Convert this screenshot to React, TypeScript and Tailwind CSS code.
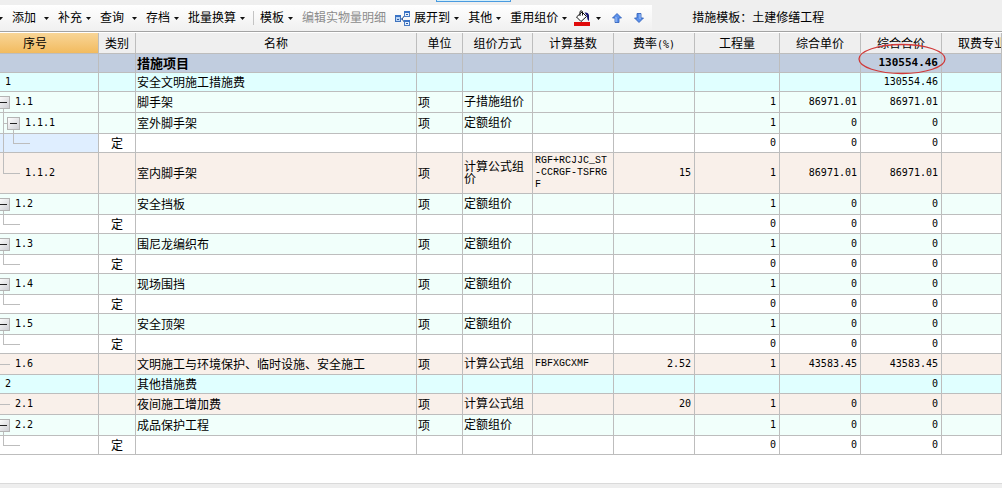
import { useState } from "react";
import clsx from "clsx";

type Tone = "title" | "section" | "group" | "formula" | "plain";

type Row = {
  no?: string;
  level: number;
  toggle?: boolean;
  guide?: "end" | "end-deep" | "mid" | "dash";
  selected?: boolean;
  tone: Tone;
  kind?: string;
  name?: string;
  unit?: string;
  method?: string;
  base?: string;
  rate?: string;
  qty?: string;
  price?: string;
  total?: string;
};

const rows: Row[] = [
  { level: 0, tone: "title", name: "措施项目", total: "130554.46" },
  { no: "1", level: 0, tone: "section", name: "安全文明施工措施费", total: "130554.46" },
  { no: "1.1", level: 1, toggle: true, tone: "group", name: "脚手架", unit: "项", method: "子措施组价", qty: "1", price: "86971.01", total: "86971.01" },
  { no: "1.1.1", level: 2, toggle: true, guide: "mid", tone: "group", name: "室外脚手架", unit: "项", method: "定额组价", qty: "1", price: "0", total: "0" },
  { level: 2, guide: "end-deep", selected: true, tone: "plain", kind: "定", qty: "0", price: "0", total: "0" },
  { no: "1.1.2", level: 2, guide: "end", tone: "formula", name: "室内脚手架", unit: "项", method: "计算公式组价", base: "RGF+RCJJC_ST-CCRGF-TSFRGF", rate: "15", qty: "1", price: "86971.01", total: "86971.01" },
  { no: "1.2", level: 1, toggle: true, tone: "group", name: "安全挡板", unit: "项", method: "定额组价", qty: "1", price: "0", total: "0" },
  { level: 1, guide: "end", tone: "plain", kind: "定", qty: "0", price: "0", total: "0" },
  { no: "1.3", level: 1, toggle: true, tone: "group", name: "围尼龙编织布", unit: "项", method: "定额组价", qty: "1", price: "0", total: "0" },
  { level: 1, guide: "end", tone: "plain", kind: "定", qty: "0", price: "0", total: "0" },
  { no: "1.4", level: 1, toggle: true, tone: "group", name: "现场围挡", unit: "项", method: "定额组价", qty: "1", price: "0", total: "0" },
  { level: 1, guide: "end", tone: "plain", kind: "定", qty: "0", price: "0", total: "0" },
  { no: "1.5", level: 1, toggle: true, tone: "group", name: "安全顶架", unit: "项", method: "定额组价", qty: "1", price: "0", total: "0" },
  { level: 1, guide: "end", tone: "plain", kind: "定", qty: "0", price: "0", total: "0" },
  { no: "1.6", level: 1, guide: "dash", tone: "formula", name: "文明施工与环境保护、临时设施、安全施工", unit: "项", method: "计算公式组", base: "FBFXGCXMF", rate: "2.52", qty: "1", price: "43583.45", total: "43583.45" },
  { no: "2", level: 0, tone: "section", name: "其他措施费", total: "0" },
  { no: "2.1", level: 1, guide: "dash", tone: "formula", name: "夜间施工增加费", unit: "项", method: "计算公式组", rate: "20", qty: "1", price: "0", total: "0" },
  { no: "2.2", level: 1, toggle: true, tone: "group", name: "成品保护工程", unit: "项", method: "定额组价", qty: "1", price: "0", total: "0" },
  { level: 1, guide: "end", tone: "plain", kind: "定", qty: "0", price: "0", total: "0" },
];

const toneClass: Record<Tone, string> = {
  title: "h-[19px] bg-[#c1cddf]",
  section: "h-[19px] bg-[#e0ffff]",
  group: "h-[21px] bg-[#f1fffb]",
  formula: "h-[21px] bg-[#f9f0ea]",
  plain: "h-[19px] bg-white",
};

const indent = ["pl-[5px]", "pl-[15px]", "pl-[25px]"];
const line = "absolute bg-[#bdbdbd]";
const cell = "border-r border-b border-[#bdbdbd] p-0";
const textCell = "pt-0.5 pl-px";
const mono = "font-['DejaVu_Sans_Mono',monospace] text-[10px]";

const Caret = () => (
  <svg width="5" height="3" viewBox="0 0 5 3" className="shrink-0" aria-hidden="true">
    <path d="M0 0h5L2.5 3z" fill="#111" />
  </svg>
);

const MenuButton = ({ label, wide }: { label: string; wide?: boolean }) => (
  <button type="button" className={clsx("flex shrink-0 items-center whitespace-nowrap", wide ? "gap-2" : "gap-1")}>
    {label}
    <Caret />
  </button>
);

const ExpandIcon = () => (
  <svg width="15" height="15" viewBox="0 0 15 15" aria-hidden="true">
    <path d="M5 8h2l3-4M7 8l3 4" fill="none" stroke="#1d4a8f" />
    <rect x="0.5" y="4.5" width="5" height="6" fill="#b9d4f5" stroke="#3f73bd" />
    <rect x="9.500" y="0.5" width="5" height="5" fill="#e4effc" stroke="#4a7cc4" />
    <rect x="9.500" y="9.500" width="5" height="5" fill="#e4effc" stroke="#4a7cc4" />
    <path d="M0 4h6v2H0zM9 0h6v2H9zM9 9h6v2H9z" fill="#3b74c6" />
    <path d="M2 8h2v1H2zM11 3h2v1h-2zM11 12h2v1h-2z" fill="#2b5ba6" />
  </svg>
);

const FillIcon = () => (
  <svg width="16" height="16" viewBox="0 0 16 16" aria-hidden="true">
    <path d="M2.500 7 8 2l4.500 4.500-5.500 5z" fill="#fff" stroke="#111" />
    <path d="M6 6V1.500Q7 0 8.500 1.500V5.500" fill="none" stroke="#111" />
    <path d="M10.500 2.500q4-.5 4.500 3v5.500q-2-1-2-5z" fill="#14146e" />
    <rect y="12" width="16" height="4" fill="#e00b0b" />
  </svg>
);

const MoveIcon = ({ down }: { down?: boolean }) => (
  <svg width="10" height="10" viewBox="0 0 10 10" className={down ? "rotate-180" : ""} aria-hidden="true">
    <path d="M5 .5 9.500 5H7v4.500H3V5H.5z" fill="#5b90ea" stroke="#2a5ab8" strokeWidth="0.8" />
    <path d="M4 4v5" stroke="#a9c8fb" />
  </svg>
);

const Toolbar = () => (
  <header className="border-b border-[#a3a3a3] bg-[#efefef]">
    <div className="flex h-[5px] items-start">
      <div className="ml-[436px] h-0.5 w-[75px] border-x border-b border-[#4a9be0] bg-[#d5f0fc]" />
    </div>
    <div className="flex h-[26px] items-center">
      <div
        role="toolbar"
        aria-label="编辑"
        className="flex h-full shrink-0 items-center gap-[9px] bg-linear-to-b from-white to-[#f0f0f0] pr-2"
      >
        <div className="flex w-[3px] justify-end overflow-hidden">
          <Caret />
        </div>
        <MenuButton label="添加" wide />
        <MenuButton label="补充" />
        <MenuButton label="查询" wide />
        <MenuButton label="存档" />
        <MenuButton label="批量换算" />
        <div className="-ml-px flex items-center gap-1.5">
          <div className="h-3.5 w-px bg-[#c4c4c4]" />
          <MenuButton label="模板" />
        </div>
        <button type="button" disabled className="whitespace-nowrap text-[#8c8c8c]">
          编辑实物量明细
        </button>
        <button type="button" className="flex items-center gap-1 whitespace-nowrap">
          <ExpandIcon />
          展开到
          <Caret />
        </button>
        <MenuButton label="其他" />
        <MenuButton label="重用组价" />
        <button type="button" aria-label="填充颜色" className="-ml-0.5 flex items-center gap-1.5">
          <FillIcon />
          <Caret />
        </button>
        <div className="flex gap-3 pl-0.5">
          <button type="button" aria-label="上移">
            <MoveIcon />
          </button>
          <button type="button" aria-label="下移">
            <MoveIcon down />
          </button>
        </div>
      </div>
      <span className="ml-10 whitespace-nowrap">措施模板：土建修缮工程</span>
    </div>
  </header>
);

const Guide = ({ guide }: { guide: Row["guide"] }) => {
  if (guide === "mid")
    return (
      <>
        <span className={clsx(line, "top-0 left-[3px] h-full w-px")} />
        <span className={clsx(line, "top-1/2 left-[3px] h-px w-1")} />
        <span className={clsx(line, "bottom-0 left-[13px] h-1 w-px")} />
      </>
    );
  if (guide === "end-deep")
    return (
      <>
        <span className={clsx(line, "top-0 left-[3px] h-full w-px")} />
        <span className={clsx(line, "top-0 left-[13px] h-1/2 w-px")} />
        <span className={clsx(line, "top-1/2 left-[13px] h-px w-[17px]")} />
      </>
    );
  if (guide === "end")
    return (
      <>
        <span className={clsx(line, "top-0 left-[3px] h-1/2 w-px")} />
        <span className={clsx(line, "top-1/2 left-[3px] h-px w-[17px]")} />
      </>
    );
  if (guide === "dash") return <span className={clsx(line, "top-1/2 left-0 h-px w-2.5")} />;
  return null;
};

const TreeCell = ({ row }: { row: Row }) => {
  const [open, setOpen] = useState(true);
  return (
    <td className={clsx(cell, "relative overflow-hidden", row.selected && "bg-[#dfeeff]")}>
      <Guide guide={row.guide} />
      {row.toggle ? (
        <div className={clsx("relative flex items-center gap-[5px]", row.level === 1 ? "-ml-[3px]" : "ml-[7px]")}>
          {row.level === 1 && <span className={clsx(line, "-bottom-1 left-[6px] h-1 w-px")} />}
          <button
            type="button"
            aria-label={row.no}
            aria-expanded={open}
            onClick={() => setOpen(!open)}
            className="flex size-[13px] items-center justify-center border border-[#b4b4b4] bg-linear-to-br from-white to-[#cfcfd4]"
          >
            <span className="h-px w-[7px] bg-[#222]" />
          </button>
          <span className={mono}>{row.no}</span>
        </div>
      ) : (
        <div className={clsx(mono, indent[row.level])}>{row.no}</div>
      )}
    </td>
  );
};

const NumberCell = ({ value, bold }: { value?: string; bold?: boolean }) => (
  <td className={clsx(cell, "relative pr-[3px] text-right", mono)}>
    {bold && value ? <b className="text-[11px]">{value}</b> : value}
    {bold && value && (
      <svg
        width="88"
        height="32"
        viewBox="0 0 88 32"
        className="pointer-events-none absolute -top-[11px] -left-[3px] z-10 max-w-none"
        aria-hidden="true"
      >
        <ellipse cx="44" cy="16" rx="43" ry="14.500" fill="none" stroke="#d03a3a" strokeWidth="1.300" />
      </svg>
    )}
  </td>
);

const SheetRow = ({ row }: { row: Row }) => {
  const title = row.tone === "title";
  return (
    <tr className={row.name === "室内脚手架" ? "h-[41px] bg-[#f9f0ea]" : toneClass[row.tone]}>
      <TreeCell row={row} />
      <td className={clsx(cell, "pt-0.5 text-center")}>{row.kind}</td>
      <td className={clsx(cell, textCell, "whitespace-nowrap", title && "text-[13px] font-bold")}>{row.name}</td>
      <td className={clsx(cell, textCell)}>{row.unit}</td>
      <td className={clsx(cell, "pl-px")}>{row.method}</td>
      <td className={clsx(cell, "pr-1 pl-0.5 break-all font-['Liberation_Mono',monospace] text-[10px]")}>{row.base}</td>
      <NumberCell value={row.rate} />
      <NumberCell value={row.qty} />
      <NumberCell value={row.price} />
      <NumberCell value={row.total} bold={title} />
      <td className={cell} />
    </tr>
  );
};

const head = "border-r border-b border-[#bdbdbd] px-0 pt-0.5 pb-0 font-normal whitespace-nowrap";

const App = () => (
  <div className="flex min-h-screen flex-col overflow-hidden bg-white font-['Liberation_Sans','Noto_Sans_CJK_SC',sans-serif] text-xs text-black">
    <Toolbar />
    <main className="flex-1 border-t border-white">
      <table className="w-full table-fixed border-separate border-spacing-0 leading-3">
        <colgroup>
          <col className="w-[99px]" />
          <col className="w-[37px]" />
          <col className="w-[281px]" />
          <col className="w-[46px]" />
          <col className="w-[70px]" />
          <col className="w-[81px]" />
          <col className="w-[81px]" />
          <col className="w-[85px]" />
          <col className="w-[81px]" />
          <col className="w-[81px]" />
          <col />
        </colgroup>
        <thead>
          <tr className="h-[21px] bg-[#efefef]">
            <th className={clsx(head, "bg-linear-to-b from-[#f8d596] to-[#f2bb5e] pr-7")}>序号</th>
            <th className={head}>类别</th>
            <th className={head}>名称</th>
            <th className={head}>单位</th>
            <th className={head}>组价方式</th>
            <th className={head}>计算基数</th>
            <th className={head}>
              费率<span className={mono}>(%)</span>
            </th>
            <th className={head}>工程量</th>
            <th className={head}>综合单价</th>
            <th className={head}>综合合价</th>
            <th className={clsx(head, "overflow-hidden pl-4 text-left")}>取费专业</th>
          </tr>
        </thead>
        <tbody>
          {rows.map((row, i) => (
            <SheetRow key={i} row={row} />
          ))}
        </tbody>
      </table>
    </main>
    <footer className="h-[5px] border-t border-[#dadada] bg-[#eeeeee]" />
  </div>
);

export default App;
